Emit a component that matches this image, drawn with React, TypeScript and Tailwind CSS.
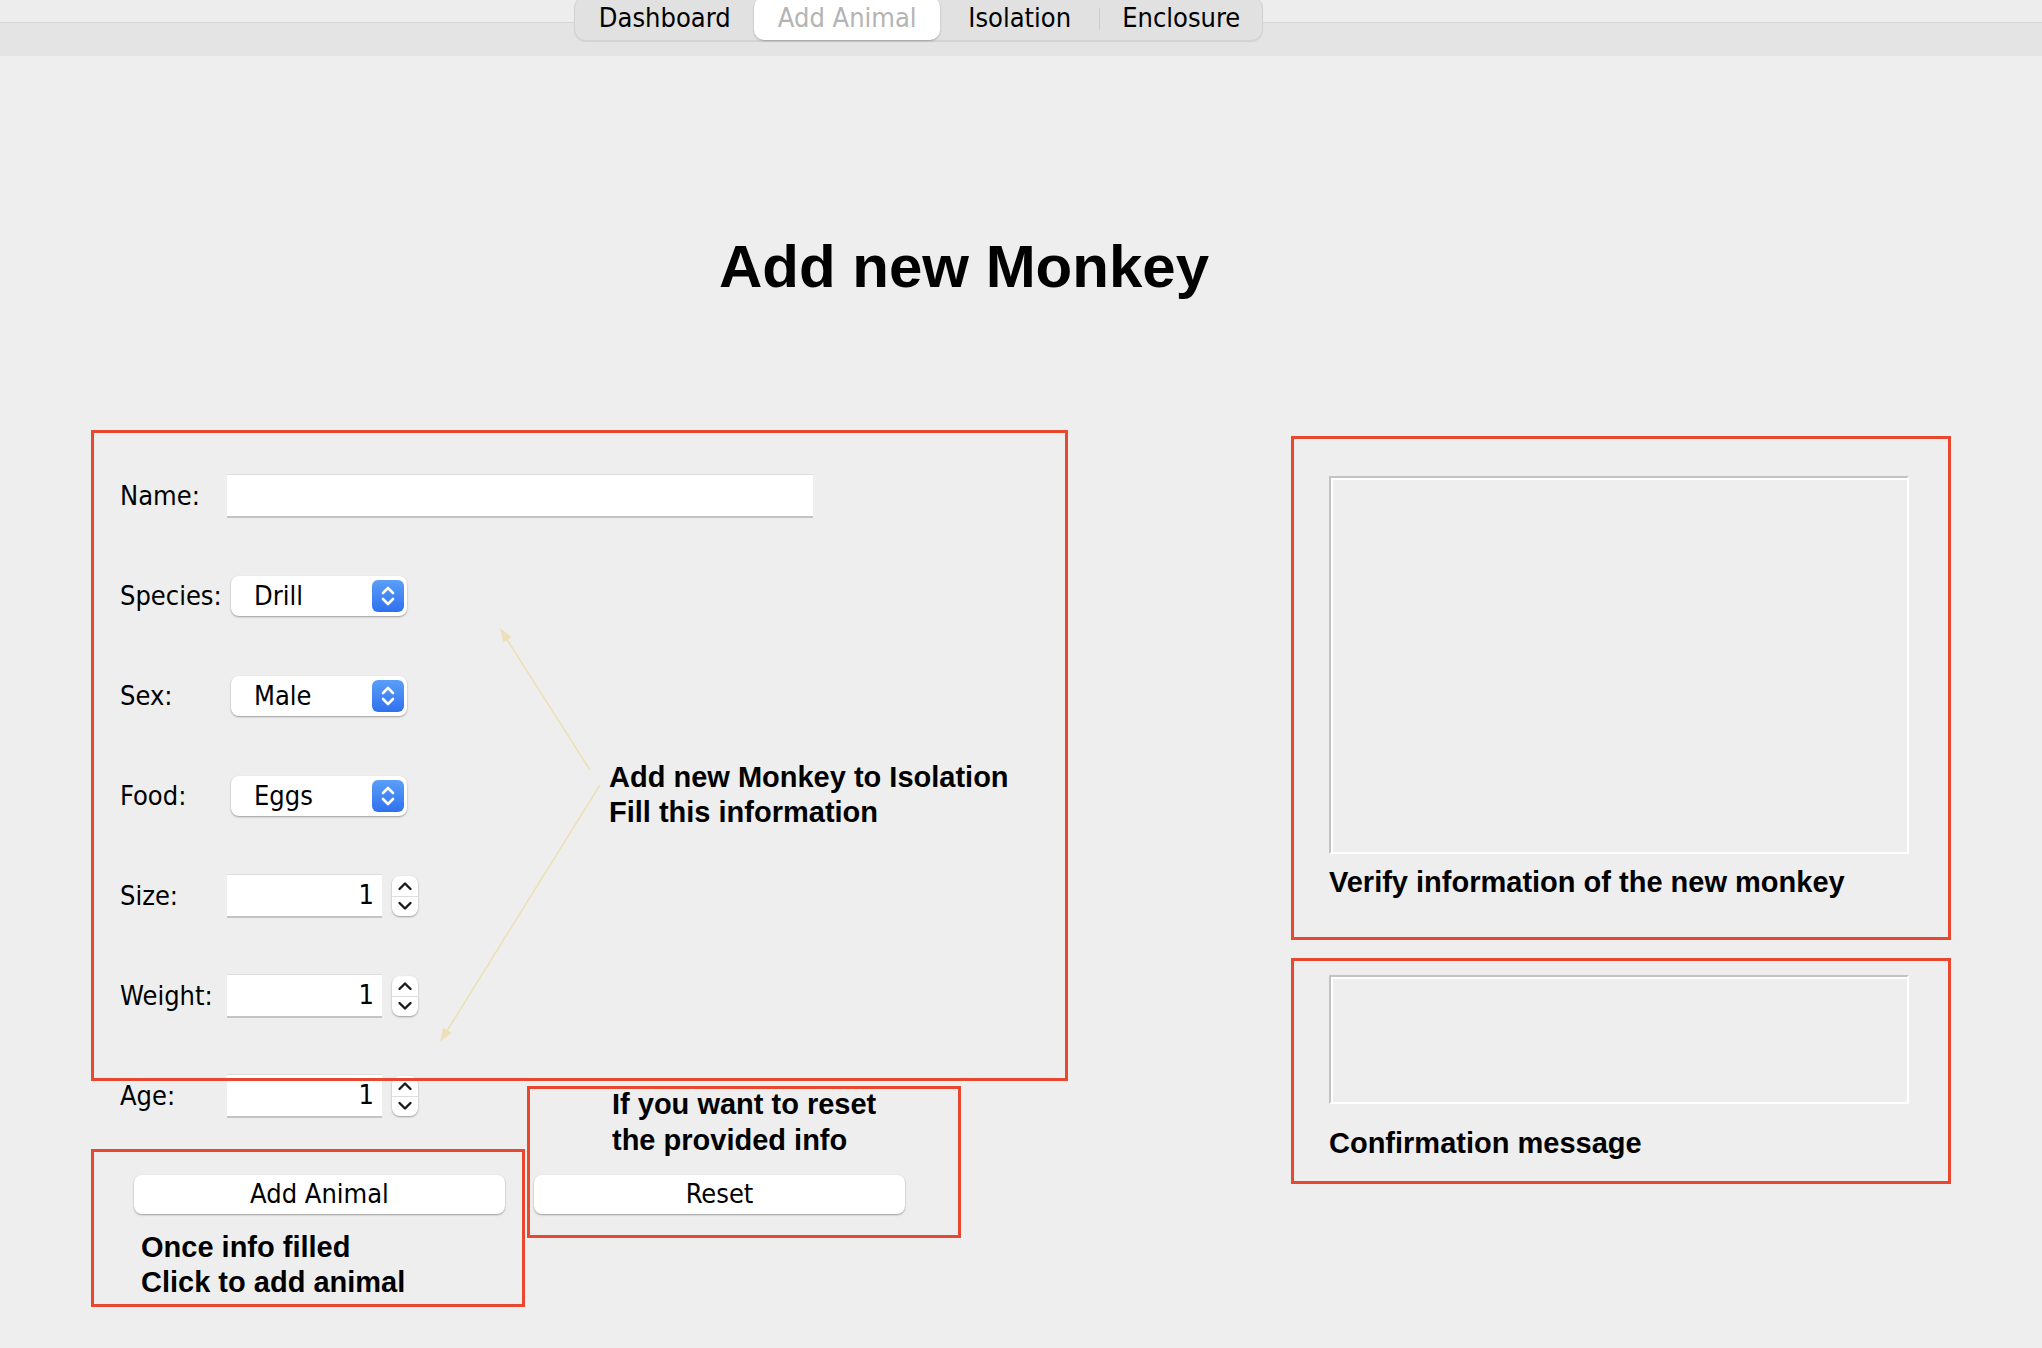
import React from "react"

const uiFont = "font-['DejaVu_Sans_Condensed','DejaVu_Sans',sans-serif] text-[27px]"
const ui = `${uiFont} text-black`
const note = "font-['Liberation_Sans',Arial,sans-serif] font-bold text-[29px] leading-[35px] text-black"
const red = "border-[3px] border-[#e8482f]"

const SelectBox = ({ value, className = "" }: { value: string; className?: string }) => (
    <div className={`w-[176px] h-[40px] bg-white rounded-[8px] shadow-[0_1px_2px_rgba(0,0,0,0.35)] flex items-center justify-between pl-[23px] pr-[3px] ${className}`}>
        <span className={ui}>{value}</span>
        <div className="w-[32px] h-[32px] rounded-[6px] bg-gradient-to-b from-[#5b9ef9] to-[#2f71ee] flex items-center justify-center">
            <svg width="32" height="32" viewBox="0 0 32 32" fill="none" stroke="white" strokeWidth="2.6" strokeLinecap="round" strokeLinejoin="round">
                <path d="M11 13 L16 8 L21 13" />
                <path d="M11 19 L16 24 L21 19" />
            </svg>
        </div>
    </div>
)

const NumberBox = ({ value }: { value: string }) => (
    <div className="flex items-center">
        <div className={`w-[155px] h-[44px] bg-white border-t border-[#dcdcdc] border-b-2 border-b-[#c4c4c4] flex items-center justify-end pr-[8px] ${ui}`}>{value}</div>
        <div className="ml-[10px] w-[26px] h-[40px] bg-white rounded-[8px] shadow-[0_1px_2px_rgba(0,0,0,0.35)] flex flex-col">
            <div className="flex-1 flex items-center justify-center border-b border-[#dddddd]">
                <svg width="18" height="14" viewBox="0 0 18 14" fill="none" stroke="#1a1a1a" strokeWidth="2.4" strokeLinecap="round" strokeLinejoin="round">
                    <path d="M3.5 10 L9 4.5 L14.5 10" />
                </svg>
            </div>
            <div className="flex-1 flex items-center justify-center">
                <svg width="18" height="14" viewBox="0 0 18 14" fill="none" stroke="#1a1a1a" strokeWidth="2.4" strokeLinecap="round" strokeLinejoin="round">
                    <path d="M3.5 4 L9 9.5 L14.5 4" />
                </svg>
            </div>
        </div>
    </div>
)

const Row = ({ label, children }: { label: string; children: React.ReactNode }) => (
    <div className="h-[100px] flex items-center">
        <span className={`${ui} w-[107px]`}>{label}</span>
        {children}
    </div>
)

const Button = ({ text }: { text: string }) => (
    <div className={`w-[371px] h-[39px] bg-white rounded-[8px] shadow-[0_1px_2px_rgba(0,0,0,0.35)] flex items-center justify-center ${ui}`}>{text}</div>
)

const TextPanel = ({ h }: { h: string }) => (
    <div className={`w-[580px] ${h} border-2 border-t-[#c2c2c2] border-l-[#c2c2c2] border-r-white border-b-white shadow-[inset_2px_2px_0_#ffffff]`} />
)

export default function App() {
    return (
        <div className="min-h-screen w-[2042px] bg-[#eeeeee] overflow-hidden">
            {/* top tab bar */}
            <div className="flex items-start h-[56px] bg-[linear-gradient(to_bottom,#ededed_0,#ededed_22px,#d6d6d6_22px,#d6d6d6_23px,#e4e4e4_23px)] pl-[574px]">
                <div className="mt-[-4px] h-[45px] w-[689px] flex items-center rounded-[12px] bg-[#e1e1e1] border border-[#d3d3d3] shadow-[0_1px_1px_rgba(0,0,0,0.08)]">
                    <div className={`w-[180px] text-center ${ui}`}>Dashboard</div>
                    <div className={`w-[186px] h-[43px] self-start bg-white rounded-[10px] shadow-[0_1px_2px_rgba(0,0,0,0.25)] flex items-center justify-center ${uiFont} text-[#b4b4b4] [text-shadow:0_1px_0_#ffffff]`}>Add Animal</div>
                    <div className={`w-[160px] text-center ${ui}`}>Isolation</div>
                    <div className="w-px h-[22px] bg-[#cdcdcd]" />
                    <div className={`w-[162px] text-center ${ui}`}>Enclosure</div>
                </div>
            </div>

            <div className="mt-[181px] w-[1928px] text-center font-['Liberation_Sans',Arial,sans-serif] font-bold text-[60px] leading-[60px] text-black">
                Add new Monkey
            </div>

            <div className="mt-[133px] flex pl-[91px]">
                {/* left side: form */}
                <div className="w-[977px]">
                    <div className={`relative z-10 h-[651px] ${red} pl-[26px] pt-[13px]`}>
                        <Row label="Name:">
                            <div className="w-[586px] h-[44px] bg-white border-t border-[#dcdcdc] border-b-2 border-b-[#c4c4c4]" />
                        </Row>
                        <Row label="Species:"><SelectBox value="Drill" className="ml-[4px]" /></Row>
                        <Row label="Sex:"><SelectBox value="Male" className="ml-[4px]" /></Row>
                        <Row label="Food:"><SelectBox value="Eggs" className="ml-[4px]" /></Row>
                        <Row label="Size:"><NumberBox value="1" /></Row>
                        <Row label="Weight:"><NumberBox value="1" /></Row>

                        <div className={`absolute left-[515px] top-[327px] ${note}`}>
                            <div>Add new Monkey to Isolation</div>
                            <div>Fill this information</div>
                        </div>
                        <svg className="absolute left-0 top-0 pointer-events-none" width="970" height="645" viewBox="0 0 970 645">
                            <line x1="496" y1="337" x2="410" y2="202" stroke="#ede0b8" strokeWidth="1.6" />
                            <polygon points="406,195 417.7,204.1 409.3,209.5" fill="#ede0b8" />
                            <line x1="506" y1="352" x2="351" y2="601" stroke="#ede0b8" strokeWidth="1.6" />
                            <polygon points="346,609 357.6,599.7 349.2,594.5" fill="#ede0b8" />
                        </svg>
                    </div>

                    <div className="flex items-start">
                        <div className="w-[434px]">
                            <div className="mt-[-35px] pl-[29px]">
                                <Row label="Age:"><NumberBox value="1" /></Row>
                            </div>
                            <div className={`mt-[3px] h-[158px] ${red} pl-[40px] pt-[23px]`}>
                                <Button text="Add Animal" />
                                <div className={`mt-[16px] ml-[7px] ${note}`}>
                                    <div>Once info filled</div>
                                    <div>Click to add animal</div>
                                </div>
                            </div>
                        </div>
                        <div className={`ml-[2px] mt-[5px] w-[434px] h-[152px] ${red} pl-[4px]`}>
                            <div className={`mt-[-3px] ml-[78px] ${note} leading-[36px]`}>
                                <div>If you want to reset</div>
                                <div>the provided info</div>
                            </div>
                            <div className="mt-[17px]"><Button text="Reset" /></div>
                        </div>
                    </div>
                </div>

                {/* right side: output panels */}
                <div className="ml-[223px] mt-[6px] w-[660px]">
                    <div className={`h-[504px] ${red} pl-[35px] pt-[37px]`}>
                        <TextPanel h="h-[378px]" />
                        <div className={`mt-[11px] ${note}`}>Verify information of the new monkey</div>
                    </div>
                    <div className={`mt-[18px] h-[226px] ${red} pl-[35px] pt-[14px]`}>
                        <TextPanel h="h-[129px]" />
                        <div className={`mt-[22px] ${note}`}>Confirmation message</div>
                    </div>
                </div>
            </div>
        </div>
    )
}
